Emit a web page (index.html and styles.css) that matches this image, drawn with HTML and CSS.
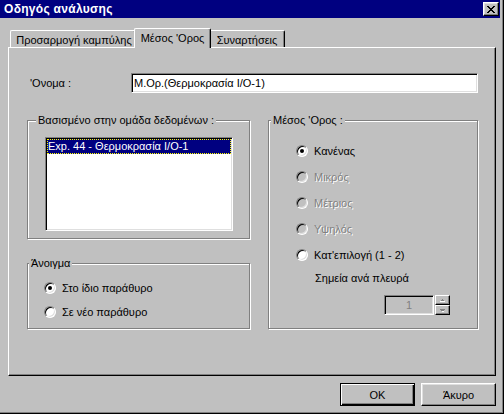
FILE: index.html
```html
<!DOCTYPE html>
<html lang="el">
<head>
<meta charset="utf-8">
<title>Οδηγός ανάλυσης</title>
<link rel="stylesheet" href="styles.css">
</head>
<body>
<div class="window">
  <div class="titlebar">
    <span class="title">Οδηγός ανάλυσης</span>
    <span class="close-btn">
      <svg width="8" height="7" viewBox="0 0 8 7" shape-rendering="crispEdges"><path fill="#000" d="M0 0h2v1H0zM6 0h2v1H6zM1 1h2v1H1zM5 1h2v1H5zM2 2h4v1H2zM3 3h2v1H3zM2 4h4v1H2zM1 5h2v1H1zM5 5h2v1H5zM0 6h2v1H0zM6 6h2v1H6z"/></svg>
    </span>
  </div>
  <div class="client">
    <div class="tabs">
      <div class="tab tab-fit">Προσαρμογή καμπύλης</div>
      <div class="tab tab-avg selected">Μέσος 'Ορος</div>
      <div class="tab tab-fn">Συναρτήσεις</div>
    </div>
    <div class="panel">
      <div class="name-row">
        <span class="name-label">'Ονομα :</span>
        <div class="textbox">Μ.Ορ.(Θερμοκρασία Ι/Ο-1)</div>
      </div>
      <div class="columns">
        <div class="col-left">
          <fieldset class="group g-data">
            <legend>Βασισμένο στην ομάδα δεδομένων :</legend>
            <div class="group-body">
              <div class="listbox">
                <div class="list-item selected-item">Exp. 44 - Θερμοκρασία Ι/Ο-1</div>
              </div>
            </div>
          </fieldset>
          <fieldset class="group g-open">
            <legend>Άνοιγμα</legend>
            <div class="group-body">
              <div class="radio-row"><span class="radio checked"></span><span>Στο ίδιο παράθυρο</span></div>
              <div class="radio-row"><span class="radio"></span><span>Σε νέο παράθυρο</span></div>
            </div>
          </fieldset>
        </div>
        <fieldset class="group g-avg">
          <legend>Μέσος 'Ορος :</legend>
          <div class="group-body">
            <div class="radio-row tall"><span class="radio checked"></span><span>Κανένας</span></div>
            <div class="radio-row tall disabled"><span class="radio"></span><span>Μικρός</span></div>
            <div class="radio-row tall disabled"><span class="radio"></span><span>Μέτριος</span></div>
            <div class="radio-row tall disabled"><span class="radio"></span><span>Υψηλός</span></div>
            <div class="radio-row tall"><span class="radio"></span><span>Κατ'επιλογή (1 - 2)</span></div>
            <div class="points-label">Σημεία ανά πλευρά</div>
            <div class="spin">
              <div class="spin-edit">1</div>
              <div class="spin-buttons">
                <span class="spin-btn"><svg width="5" height="3" viewBox="0 0 5 3" shape-rendering="crispEdges"><path fill="#808080" d="M2 0h1v1H2zM1 1h3v1H1z"/><path fill="#fff" d="M0 2h5v1H0z"/></svg></span>
                <span class="spin-btn"><svg width="5" height="3" viewBox="0 0 5 3" shape-rendering="crispEdges"><path fill="#808080" d="M0 0h5v1H0zM1 1h3v1H1z"/><path fill="#fff" d="M2 2h2v1H2z"/></svg></span>
              </div>
            </div>
          </div>
        </fieldset>
      </div>
    </div>
    <div class="buttons">
      <button class="btn default">OK</button>
      <button class="btn">Άκυρο</button>
    </div>
  </div>
</div>
</body>
</html>
```
FILE: styles.css
```css
* { box-sizing: border-box; }
html, body { margin: 0; padding: 0; }
body {
  width: 504px;
  height: 414px;
  overflow: hidden;
  background: #c0c0c0;
  font-family: "Liberation Sans", Arial, sans-serif;
  font-size: 11px;
  color: #000;
}
.window {
  width: 504px;
  height: 414px;
  background: #c0c0c0;
  border-right: 1px solid #000;
  border-bottom: 1px solid #000;
  box-shadow: inset -1px -1px 0 #808080;
  padding: 0 3px 3px 0;
  display: flex;
  flex-direction: column;
}
.titlebar {
  height: 18px;
  background: #000080;
  display: flex;
  align-items: center;
  justify-content: space-between;
  padding: 0 1px 0 4px;
}
.title {
  color: #fff;
  font-weight: bold;
  font-size: 12px;
  letter-spacing: 0.3px;
}
.close-btn {
  width: 16px;
  height: 14px;
  background: #c0c0c0;
  border: 1px solid;
  border-color: #fff #000 #000 #fff;
  box-shadow: inset -1px -1px 0 #808080, inset 1px 1px 0 #dfdfdf;
  display: flex;
  align-items: center;
  justify-content: center;
  padding-right: 1px;
}
.close-btn svg { display: block; }
.client {
  flex: 1;
  padding: 10px 4px 0 8px;
  display: flex;
  flex-direction: column;
}
.tabs {
  height: 19px;
  display: flex;
  align-items: flex-end;
  padding-left: 2px;
}
.tab {
  height: 17px;
  border-left: 1px solid #fff;
  border-top: 1px solid #fff;
  border-right: 1px solid #000;
  border-radius: 2px 2px 0 0;
  box-shadow: inset -1px 0 0 #808080;
  background: #c0c0c0;
  display: flex;
  align-items: center;
  justify-content: center;
  padding-top: 1px;
  white-space: nowrap;
}
.tab-fit { width: 126px; padding-left: 2px; }
.tab-avg { width: 73px; }
.tab-fn { width: 76px; }
.tab.selected {
  position: relative;
  z-index: 1;
  width: 77px;
  height: 20px;
  margin: 0 -2px -1px;
  padding-top: 0;
  padding-bottom: 2px;
}
.panel {
  width: 488px;
  height: 329px;
  border: 1px solid;
  border-color: #fff #000 #000 #fff;
  box-shadow: inset -1px -1px 0 #808080;
  padding: 25px 0 0 18px;
}
.name-row {
  display: flex;
  align-items: center;
  height: 20px;
}
.name-label {
  width: 104px;
  padding-left: 3px;
}
.textbox, .listbox, .spin-edit {
  border: 1px solid;
  border-color: #808080 #fff #fff #808080;
  box-shadow: inset 1px 1px 0 #000, inset -1px -1px 0 #dfdfdf;
  padding: 1px;
}
.textbox {
  width: 347px;
  height: 20px;
  background: #fff;
  display: flex;
  align-items: center;
  padding-left: 2px;
}
.columns {
  margin-top: 20px;
  display: grid;
  grid-template-columns: 224px 210px;
  column-gap: 17px;
}
.group {
  margin: 0;
  min-width: 0;
  padding-left: 0;
  padding-right: 0;
  border: 1px solid #808080;
  box-shadow: 1px 1px 0 #fff, inset 1px 1px 0 #fff;
}
.group legend {
  padding: 0 2px;
  line-height: 14px;
  white-space: nowrap;
  background: #c0c0c0;
}
.g-data {
  width: 223px;
  padding-top: 10px;
  padding-bottom: 7px;
}
.g-data legend { margin-left: 8px; }
.g-data .group-body { padding-left: 17px; }
.listbox {
  width: 188px;
  height: 94px;
  background: #fff;
}
.list-item {
  height: 15px;
  line-height: 14px;
  padding-left: 1px;
  white-space: nowrap;
}
.selected-item {
  background: #000080;
  color: #fff;
  outline: 1px dotted #ffff00;
  outline-offset: -1px;
}
.g-open {
  width: 223px;
  margin-top: 17px;
  padding-top: 6px;
  padding-bottom: 4px;
}
.g-open legend { margin-left: 1px; }
.g-open .group-body { padding-left: 16px; }
.radio-row {
  height: 24px;
  display: flex;
  align-items: center;
  gap: 6px;
}
.radio-row.tall { height: 26px; }
.radio {
  position: relative;
  width: 12px;
  height: 12px;
  flex: none;
  border-radius: 50%;
  border: 1px solid;
  border-color: #808080 #fff #fff #808080;
  box-shadow: inset 1px 1px 0 #000, inset -1px -1px 0 #dfdfdf;
  background: #fff;
}
.radio.checked::after {
  content: "";
  position: absolute;
  left: 3px;
  top: 3px;
  width: 4px;
  height: 4px;
  border-radius: 50%;
  background: #000;
}
.disabled { color: #808080; text-shadow: 1px 1px 0 #fff; }
.disabled .radio { background: #c0c0c0; }
.g-avg {
  width: 210px;
  padding-top: 11px;
  padding-bottom: 13px;
}
.g-avg legend { margin-left: 2px; }
.g-avg .group-body { padding-left: 27px; }
.points-label {
  margin-top: 3px;
  margin-left: 19px;
  line-height: 14px;
}
.spin {
  margin-top: 10px;
  margin-left: 88px;
  display: flex;
  height: 20px;
}
.spin-edit {
  width: 50px;
  height: 20px;
  background: #c0c0c0;
  color: #808080;
  display: flex;
  align-items: center;
  justify-content: center;
}
.spin-buttons {
  margin-left: 1px;
  width: 15px;
  display: flex;
  flex-direction: column;
}
.spin-btn {
  height: 10px;
  border: 1px solid;
  border-color: #fff #000 #000 #fff;
  box-shadow: inset -1px -1px 0 #808080;
  display: flex;
  align-items: center;
  justify-content: center;
}
.spin-btn svg { display: block; }
.buttons {
  margin-top: 7px;
  display: flex;
  justify-content: flex-end;
  gap: 6px;
}
.btn {
  width: 75px;
  height: 23px;
  margin: 0;
  padding: 0;
  font-family: inherit;
  font-size: 11px;
  color: #000;
  background: #c0c0c0;
  border: 1px solid;
  border-color: #fff #000 #000 #fff;
  box-shadow: inset -1px -1px 0 #808080, inset 1px 1px 0 #dfdfdf;
}
.btn.default {
  border-color: #000;
  box-shadow: inset 1px 1px 0 #fff, inset -1px -1px 0 #000, inset -2px -2px 0 #808080;
}
```
